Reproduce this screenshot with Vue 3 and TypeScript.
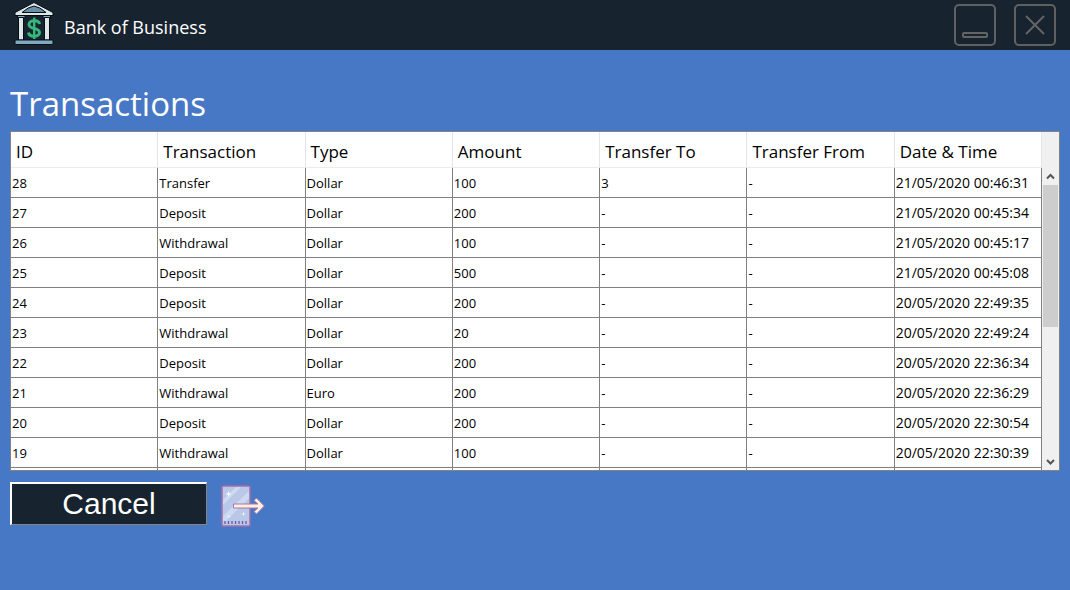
<script setup lang="ts">
interface Transaction {
  id: number
  kind: string
  currency: string
  amount: number
  to: string
  from: string
  date: string
}

const columns: string[] = ['ID', 'Transaction', 'Type', 'Amount', 'Transfer To', 'Transfer From', 'Date & Time']

const rows: Transaction[] = [
  { id: 28, kind: 'Transfer', currency: 'Dollar', amount: 100, to: '3', from: '-', date: '21/05/2020 00:46:31' },
  { id: 27, kind: 'Deposit', currency: 'Dollar', amount: 200, to: '-', from: '-', date: '21/05/2020 00:45:34' },
  { id: 26, kind: 'Withdrawal', currency: 'Dollar', amount: 100, to: '-', from: '-', date: '21/05/2020 00:45:17' },
  { id: 25, kind: 'Deposit', currency: 'Dollar', amount: 500, to: '-', from: '-', date: '21/05/2020 00:45:08' },
  { id: 24, kind: 'Deposit', currency: 'Dollar', amount: 200, to: '-', from: '-', date: '20/05/2020 22:49:35' },
  { id: 23, kind: 'Withdrawal', currency: 'Dollar', amount: 20, to: '-', from: '-', date: '20/05/2020 22:49:24' },
  { id: 22, kind: 'Deposit', currency: 'Dollar', amount: 200, to: '-', from: '-', date: '20/05/2020 22:36:34' },
  { id: 21, kind: 'Withdrawal', currency: 'Euro', amount: 200, to: '-', from: '-', date: '20/05/2020 22:36:29' },
  { id: 20, kind: 'Deposit', currency: 'Dollar', amount: 200, to: '-', from: '-', date: '20/05/2020 22:30:54' },
  { id: 19, kind: 'Withdrawal', currency: 'Dollar', amount: 100, to: '-', from: '-', date: '20/05/2020 22:30:39' },
]
</script>

<template>
  <div class="window">
    <header class="titlebar">
      <svg class="logo" viewBox="0 0 40 44" aria-hidden="true">
        <g stroke="#080d13" stroke-width="1" stroke-linejoin="round">
          <path d="M20 1.500 L39 11.500 V14.500 H1 V11.500 Z" fill="#dde7e8" />
          <path d="M20 5 Q26 6 32 11.500 H8 Q14 6 20 5 Z" fill="#6590a8" />
          <rect x="3.500" y="14.500" width="7.500" height="2.500" fill="#7fabc0" />
          <rect x="29" y="14.500" width="7.500" height="2.500" fill="#7fabc0" />
          <rect x="4.500" y="16.500" width="5" height="22.500" fill="#dde7e8" />
          <rect x="30.500" y="16.500" width="5" height="22.500" fill="#dde7e8" />
          <rect x="1" y="39" width="38" height="4.500" rx="1" fill="#7fabc0" />
        </g>
        <g fill="none" stroke="#35b779" stroke-width="3">
          <path d="M25.500 23 C25 18.500 15 18.500 15 23.500 C15 29 25.500 26 25.500 31.500 C25.500 36.500 15 36.500 14.500 31.500" />
          <path d="M20.200 16.500 V38" stroke-width="2.400" />
        </g>
      </svg>
      <span class="name">Bank of Business</span>
      <div class="controls">
        <button class="control" type="button" aria-label="Minimize">
          <svg viewBox="0 0 42 42"><rect x="9" y="29" width="24" height="4" rx="1" /></svg>
        </button>
        <button class="control" type="button" aria-label="Close">
          <svg viewBox="0 0 42 42"><path d="M12 12 L30 30 M30 12 L12 30" /></svg>
        </button>
      </div>
    </header>

    <main class="content">
      <h1>Transactions</h1>

      <div class="grid">
        <div class="viewport">
          <table>
            <thead>
              <tr>
                <th v-for="column in columns" :key="column" scope="col">{{ column }}</th>
              </tr>
            </thead>
            <tbody>
              <tr v-for="row in rows" :key="row.id">
                <td>{{ row.id }}</td>
                <td>{{ row.kind }}</td>
                <td>{{ row.currency }}</td>
                <td>{{ row.amount }}</td>
                <td>{{ row.to }}</td>
                <td>{{ row.from }}</td>
                <td class="date">{{ row.date }}</td>
              </tr>
              <tr>
                <td v-for="column in columns" :key="column"></td>
              </tr>
            </tbody>
          </table>
        </div>
        <div class="scrollbar">
          <button class="arrow" type="button" aria-label="Scroll up">
            <svg viewBox="0 0 17 17"><path d="M5 10.500 L8.500 7 L12 10.500" /></svg>
          </button>
          <div class="track"><div class="thumb"></div></div>
          <button class="arrow" type="button" aria-label="Scroll down">
            <svg viewBox="0 0 17 17"><path d="M5 7 L8.500 10.500 L12 7" /></svg>
          </button>
        </div>
      </div>

      <div class="actions">
        <button class="cancel" type="button">Cancel</button>
        <button class="export" type="button" aria-label="Export">
          <svg viewBox="0 0 44 42">
            <rect x="1" y="1" width="28" height="40" rx="1" fill="#b9c8e8" stroke="#a070a8" stroke-width="1.500" />
            <path d="M2 15 L15 2 H20 L2 20 Z M2 31 L28 6 V13 L5 36 H2 Z" fill="#cdd9f0" />
            <path d="M7.500 6 L8.300 8.200 L10.500 9 L8.300 9.800 L7.500 12 L6.700 9.800 L4.500 9 L6.700 8.200 Z M22.500 27 L23 28.500 L24.500 29 L23 29.500 L22.500 31 L22 29.500 L20.500 29 L22 28.500 Z M8 30 L8.400 31.100 L9.500 31.500 L8.400 31.900 L8 33 L7.600 31.900 L6.500 31.500 L7.600 31.100 Z" fill="#f8fbff" />
            <path d="M4 36 V39 M7.500 36 V39 M11 36 V39 M14.500 36 V39 M18 36 V39 M21.500 36 V39 M25 36 V39" stroke="#6b5aa0" stroke-width="1.300" />
            <path d="M12.500 19 H37 L33 15.500 L35.500 13 L43.300 21 L35.500 29 L33 26.500 L37 23 H12.500 Z" fill="#fff0e2" stroke="#a878a8" stroke-width="1" stroke-linejoin="round" />
          </svg>
        </button>
      </div>
    </main>
  </div>
</template>

<style>
body {
  margin: 0;
}
</style>

<style scoped>
.window {
  min-height: 100vh;
  background: #4778c5;
  color: #fff;
  font-family: "Open Sans", "Noto Sans", sans-serif;
}

button {
  padding: 0;
  font: inherit;
}

.titlebar {
  display: flex;
  align-items: center;
  height: 50px;
  padding: 0 14px;
  background: #182330;
}

.logo {
  width: 40px;
  height: 44px;
  margin-bottom: 4px;
}

.name {
  margin: 4px 0 0 10px;
  font-size: 18px;
  line-height: 24px;
}

.controls {
  display: flex;
  gap: 18px;
  margin-left: auto;
}

.control {
  box-sizing: border-box;
  width: 42px;
  height: 42px;
  border: 2px solid #5e6062;
  border-radius: 5px;
  background: transparent;
}

.control svg {
  display: block;
  width: 42px;
  height: 42px;
  margin: -2px;
  fill: none;
  stroke: #646464;
  stroke-width: 2;
}

.content {
  padding: 32px 10px 20px;
}

h1 {
  margin: 0;
  font-size: 33px;
  font-weight: 400;
  line-height: 44px;
}

.grid {
  display: flex;
  box-sizing: border-box;
  height: 340px;
  margin-top: 5px;
  border: 1px solid #838383;
  background: #fff;
  color: #000;
}

.viewport {
  flex: 1;
  overflow: hidden;
}

table {
  width: 100%;
  table-layout: fixed;
  border-collapse: separate;
  border-spacing: 0;
}

th {
  box-sizing: border-box;
  height: 36px;
  padding: 4px 0 0 5px;
  border-right: 1px solid #e5e5e5;
  border-bottom: 1px solid #ececec;
  font-size: 17px;
  font-weight: 400;
  line-height: 24px;
  text-align: left;
}

td {
  box-sizing: border-box;
  height: 30px;
  padding: 0 0 0 1px;
  border-right: 1px solid #808080;
  border-bottom: 1px solid #808080;
  font-size: 13px;
  line-height: 20px;
}

.date {
  font-size: 14px;
}

.scrollbar {
  display: flex;
  flex-direction: column;
  width: 17px;
  padding-top: 36px;
  background: #f0f0f0;
}

.arrow {
  width: 17px;
  height: 17px;
  border: 0;
  background: #f0f0f0;
}

.arrow svg {
  display: block;
  width: 17px;
  height: 17px;
  fill: none;
  stroke: #555;
  stroke-width: 2;
}

.track {
  flex: 1;
}

.thumb {
  height: 53%;
  margin: 0 1px;
  background: #cdcdcd;
}

.actions {
  display: flex;
  align-items: flex-start;
  gap: 14px;
  margin-top: 11px;
}

.cancel {
  box-sizing: border-box;
  width: 197px;
  height: 43px;
  border: 2px solid;
  border-width: 2px 1px 1px 2px;
  border-color: #fff #858585 #858585 #fff;
  background: #182330;
  color: #fff;
  font-family: "Liberation Sans", Arial, sans-serif;
  font-size: 30px;
  line-height: 36px;
}

.export {
  width: 44px;
  height: 42px;
  margin-top: 3px;
  border: 0;
  background: transparent;
}

.export svg {
  display: block;
  width: 44px;
  height: 42px;
}
</style>
